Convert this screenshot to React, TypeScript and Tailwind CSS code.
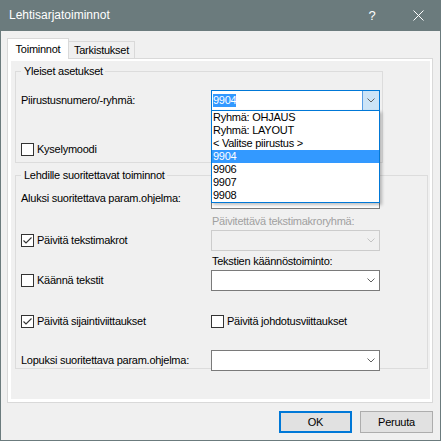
import type { ReactNode } from "react";

const drawingItems = ["Ryhmä: OHJAUS", "Ryhmä: LAYOUT", "< Valitse piirustus >", "9904", "9906", "9907", "9908"];

function Chevron({ disabled }: { disabled?: boolean }) {
  return (
    <svg width="8" height="5" viewBox="0 0 8 5" className="block">
      <path d="M0.5 0.5 L4 4 L7.5 0.5" fill="none" stroke={disabled ? "#c4c4c4" : "#606060"} strokeWidth="1" />
    </svg>
  );
}

type ComboProps = {
  value?: ReactNode;
  disabled?: boolean;
  focused?: boolean;
  children?: ReactNode;
};

function Combo({ value, disabled, focused, children }: ComboProps) {
  const frame = focused
    ? "border-[#0078d7] bg-white"
    : disabled
      ? "border-[#cccccc] bg-[#f0f0f0]"
      : "border-[#7a7a7a] bg-white";
  return (
    <div className={`relative flex h-[21px] w-[169px] shrink-0 border ${frame}`}>
      <div className="flex flex-1 items-center pl-[1px]">{value}</div>
      <div
        className={`flex w-[17px] items-center justify-center ${
          focused ? "border-l border-[#569de5] bg-[#cce4f7]" : ""
        }`}
      >
        <Chevron disabled={disabled} />
      </div>
      {children}
    </div>
  );
}

function DropList({ items, selected }: { items: string[]; selected: string }) {
  return (
    <div className="absolute left-[-1px] top-[19px] z-20 w-[169px] border border-[#0078d7] bg-white shadow-[2px_2px_3px_rgba(0,0,0,0.25)]">
      {items.map((item) => (
        <div
          key={item}
          className={`h-[13px] pl-[1px] leading-[13px] ${item === selected ? "bg-[#3399ff] text-white" : ""}`}
        >
          {item}
        </div>
      ))}
    </div>
  );
}

function CheckBox({ label, checked }: { label: string; checked?: boolean }) {
  return (
    <label className="flex h-[13px] items-center gap-[3px]">
      <span className="flex h-[13px] w-[13px] shrink-0 items-center justify-center border border-[#333333] bg-white">
        {checked && (
          <svg width="11" height="11" viewBox="0 0 11 11" className="block">
            <path d="M1.5 5.5 L4 8 L9.5 2.5" fill="none" stroke="#333333" strokeWidth="1.1" />
          </svg>
        )}
      </span>
      <span className="leading-[13px]">{label}</span>
    </label>
  );
}

function GroupBox({ title, className, children }: { title: string; className: string; children: ReactNode }) {
  return (
    <fieldset className={`border border-[#dcdcdc] pl-[5px] ${className}`}>
      <legend className="pl-[3px] pr-[2px] leading-[13px]">{title}</legend>
      {children}
    </fieldset>
  );
}

function Button({ label, isDefault }: { label: string; isDefault?: boolean }) {
  return (
    <button
      className={`flex h-[22px] w-[73px] items-center justify-center bg-[#e1e1e1] ${
        isDefault ? "border-2 border-[#0078d7]" : "border border-[#adadad]"
      }`}
    >
      {label}
    </button>
  );
}

export default function App() {
  return (
    <div
      className="flex h-[441px] w-[441px] flex-col bg-[#6b7b7d] text-[11px] leading-[13px] tracking-[-0.25px] text-black"
      style={{ fontFamily: '"Liberation Sans", Arial, sans-serif' }}
    >
      {/* title bar */}
      <div className="flex h-[31px] shrink-0 items-center tracking-normal text-white">
        <div className="flex-1 pl-[9px] text-[12px]">Lehtisarjatoiminnot</div>
        <div className="flex h-full w-[46px] items-center justify-center text-[13px]">?</div>
        <div className="flex h-full w-[46px] items-center justify-center">
          <svg width="11" height="11" viewBox="0 0 11 11">
            <path d="M0.5 0.5 L10.5 10.5 M10.5 0.5 L0.5 10.5" stroke="#ffffff" strokeWidth="1" />
          </svg>
        </div>
      </div>

      <div className="mx-[1px] mb-[1px] flex flex-1 flex-col bg-[#f0f0f0]">
        {/* tab strip */}
        <div className="flex items-end pl-[6px] pt-[7px]">
          <div className="relative z-10 mb-[-1px] flex h-[21px] w-[62px] items-center justify-center border-x border-t border-[#d9d9d9] bg-white">
            Toiminnot
          </div>
          <div className="flex h-[17px] w-[66px] items-center justify-center border-r border-t border-[#d9d9d9] bg-[#f0f0f0] pt-[1px]">
            Tarkistukset
          </div>
        </div>

        {/* tab page */}
        <div className="ml-[6px] flex h-[345px] w-[426px] border border-[#d9d9d9] bg-white pb-[3px] pl-[3px] pr-[2px] pt-[2px]">
          <div className="flex flex-1 flex-col bg-[#f0f0f0] pl-[4px] pt-[4px]">
            <GroupBox title="Yleiset asetukset" className="w-[368px] pb-[6px] pt-[12px]">
              <div className="flex h-[21px] items-center">
                <div className="w-[190px]">Piirustusnumero/-ryhmä:</div>
                <Combo
                  focused
                  value={<span className="bg-[#3399ff] leading-[13px] text-white">9904</span>}
                >
                  <DropList items={drawingItems} selected="9904" />
                </Combo>
              </div>
              <div className="mt-[32px]">
                <CheckBox label="Kyselymoodi" />
              </div>
            </GroupBox>

            <GroupBox title="Lehdille suoritettavat toiminnot" className="mt-[6px] w-[413px] pt-[6px]">
              <div className="flex h-[21px] items-center">
                <div className="w-[190px]">Aluksi suoritettava param.ohjelma:</div>
                <Combo />
              </div>
              <div className="mt-[6px] flex h-[13px]">
                <div className="w-[190px]" />
                <div className="pl-[1px] text-[#a0a0a0]">Päivitettävä tekstimakroryhmä:</div>
              </div>
              <div className="mt-[2px] flex h-[21px] items-center">
                <div className="w-[190px]">
                  <CheckBox label="Päivitä tekstimakrot" checked />
                </div>
                <Combo disabled />
              </div>
              <div className="mt-[4px] flex h-[13px]">
                <div className="w-[190px]" />
                <div className="pl-[1px]">Tekstien käännöstoiminto:</div>
              </div>
              <div className="mt-[2px] flex h-[21px] items-center">
                <div className="w-[190px]">
                  <CheckBox label="Käännä tekstit" />
                </div>
                <Combo />
              </div>
              <div className="mt-[24px] flex h-[13px] items-center">
                <div className="w-[190px]">
                  <CheckBox label="Päivitä sijaintiviittaukset" checked />
                </div>
                <CheckBox label="Päivitä johdotusviittaukset" />
              </div>
              <div className="mb-[-3px] mt-[22px] flex h-[21px] items-center">
                <div className="w-[190px]">Lopuksi suoritettava param.ohjelma:</div>
                <Combo />
              </div>
            </GroupBox>
          </div>
        </div>

        {/* dialog buttons */}
        <div className="mt-[8px] flex justify-end gap-[8px] pr-[7px]">
          <Button label="OK" isDefault />
          <Button label="Peruuta" />
        </div>
      </div>
    </div>
  );
}
